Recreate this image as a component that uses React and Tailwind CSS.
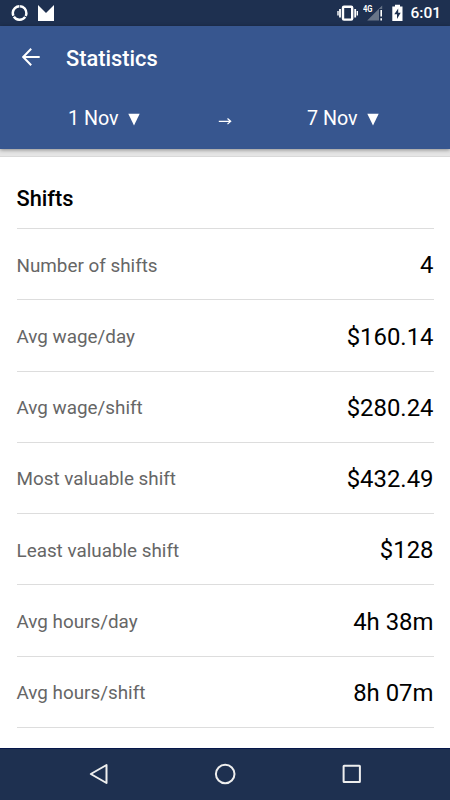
const rows = [
  ["Number of shifts", "4"],
  ["Avg wage/day", "$160.14"],
  ["Avg wage/shift", "$280.24"],
  ["Most valuable shift", "$432.49"],
  ["Least valuable shift", "$128"],
  ["Avg hours/day", "4h 38m"],
  ["Avg hours/shift", "8h 07m"],
];

function StatusBar() {
  return (
    <div className="flex h-[26px] shrink-0 items-center bg-[#1e3050] text-white">
      <svg className="ml-[11px]" width="18" height="18" viewBox="0 0 18 18" fill="none" stroke="currentColor" strokeWidth="2.5">
        <circle cx="8.6" cy="9" r="6.8" strokeDasharray="13.3 .94" transform="rotate(-86 8.6 9)" />
      </svg>
      <svg className="ml-[9px]" width="16" height="18" viewBox="0 0 16 18" fill="currentColor">
        <path d="M0 1 L8 9 L16 1 V17 H0Z" />
      </svg>
      <div className="grow" />
      <svg width="22" height="18" viewBox="0 0 22 18" fill="none" stroke="currentColor">
        <rect x="6" y="2.8" width="9.2" height="12.8" rx="1" strokeWidth="2.4" />
        <path d="M3 5v8.5M18.2 5v8.5" strokeWidth="1.8" />
        <path d="M1 7v4.5M20.3 7v4.5" strokeWidth="1.4" />
      </svg>
      <svg className="ml-[4px]" width="22" height="18" viewBox="0 0 22 18">
        <path d="M19.2 1.5V16.5H4.2Z" fill="#697588" />
        <rect x="16" y="5" width="4.6" height="12" fill="#1e3050" />
        <path d="M18.2 6v6.5M18.2 14.3v2.2" stroke="#fff" strokeWidth="1.6" />
        <text x="0" y="8" fill="#fff" fontSize="8.5" fontWeight="700" fontFamily="Roboto, sans-serif" textLength="9.5" lengthAdjust="spacingAndGlyphs">4G</text>
      </svg>
      <svg className="ml-[7px]" width="11" height="18" viewBox="0 0 11 18">
        <path d="M3 .8H8V2.5H10.5V17H.3V2.5H3Z" fill="#fff" />
        <path d="M6.2 4.5L2.3 10.3H5V15L8.7 8.8H6.2Z" fill="#1e3050" />
      </svg>
      <span className="mt-[2px] mr-[9px] ml-[7px] text-[15.5px] leading-none font-medium">6:01</span>
    </div>
  );
}

function DatePick({ label }) {
  return (
    <div className="flex items-center gap-[9px]">
      <span className="mt-px text-[19.7px] leading-6">{label}</span>
      <svg className="mt-[2px]" width="12" height="13" viewBox="0 0 12 13" fill="currentColor">
        <path d="M.3 .7H11.7L6 12.5Z" />
      </svg>
    </div>
  );
}

function Header() {
  return (
    <header className="relative z-10 flex h-[123px] shrink-0 flex-col bg-[#37568f] text-white shadow-[0_1px_4px_rgba(0,0,0,0.4)]">
      <div className="flex h-[62px] items-center pl-[22px]">
        <svg width="18" height="18" viewBox="0 0 18 18" fill="none" stroke="currentColor" strokeWidth="2">
          <path d="M17.7 9H1.5M9.2 .8L1.2 9L9.2 17.2" />
        </svg>
        <h1 className="mt-[3px] ml-[26px] text-[21.8px] leading-7 font-medium">Statistics</h1>
      </div>
      <div className="flex h-[61px] items-center pl-[68px]">
        <div className="w-[150px]"><DatePick label="1 Nov" /></div>
        <svg className="mt-[5px] w-[89px]" width="89" height="10" viewBox="0 0 89 10" fill="none" stroke="currentColor" strokeWidth="1.2">
          <path d="M.8 5.3H12.5M9.5 2.5L12.7 5.3L9.5 8.1" />
        </svg>
        <DatePick label="7 Nov" />
      </div>
    </header>
  );
}

function NavigationBar() {
  return (
    <nav className="flex h-[52px] shrink-0 items-center border-t border-[#06174a] bg-[#1e3050]">
      <svg width="450" height="30" viewBox="0 0 450 30" fill="none" stroke="#eeeeee" strokeWidth="2">
        <path d="M106.5 5V23L90.8 14Z" strokeLinejoin="round" />
        <circle cx="225.2" cy="14" r="9.3" />
        <rect x="343.6" y="5.8" width="16.3" height="16.3" rx=".5" />
      </svg>
    </nav>
  );
}

export default function App() {
  return (
    <div className="flex h-[800px] w-[450px] flex-col overflow-hidden bg-[#e5e5e5] font-[Roboto,sans-serif]">
      <StatusBar />
      <Header />
      <main className="mt-[7px] grow border-t border-[#d9d9d9] bg-white pr-[16.5px] pl-[16.5px]">
        <h2 className="flex h-[71.2px] items-center pt-[13.5px] text-[21.8px] font-medium text-black">Shifts</h2>
        {rows.map(([label, value]) => (
          <div key={label} className="flex h-[71.25px] items-center justify-between border-t border-[#dddddd] pt-[3px]">
            <span className="text-[18.85px] text-[#666666]">{label}</span>
            <span className="pt-px text-[23.9px] text-black">{value}</span>
          </div>
        ))}
        <div className="border-t border-[#dddddd]" />
      </main>
      <NavigationBar />
    </div>
  );
}
